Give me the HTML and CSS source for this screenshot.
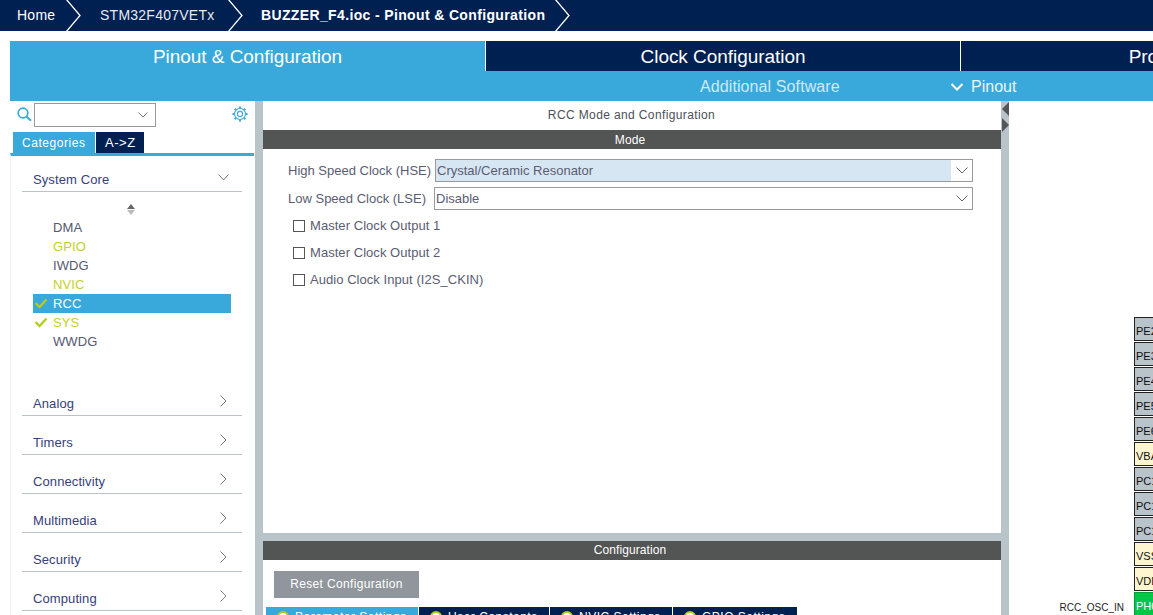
FILE: index.html
```html
<!DOCTYPE html>
<html lang="en">
<head>
<meta charset="utf-8">
<title>BUZZER_F4.ioc - Pinout &amp; Configuration</title>
<link rel="stylesheet" href="styles.css">
</head>
<body>
<nav class="crumbs">
  <span class="crumb c1">Home</span><svg class="sep" width="20" height="31" viewBox="0 0 20 31"><path d="M1 -1 L15 15.5 L1 32" fill="none" stroke="#fff" stroke-width="1.3"/></svg>
  <span class="crumb c2">STM32F407VETx</span><svg class="sep" width="20" height="31" viewBox="0 0 20 31"><path d="M1 -1 L15 15.5 L1 32" fill="none" stroke="#fff" stroke-width="1.3"/></svg>
  <span class="crumb c3">BUZZER_F4.ioc - Pinout &amp; Configuration</span><svg class="sep" width="20" height="31" viewBox="0 0 20 31"><path d="M1 -1 L15 15.5 L1 32" fill="none" stroke="#fff" stroke-width="1.3"/></svg>
</nav>
<div class="topgap"></div>
<header class="tabs">
  <div class="tabrow">
    <div class="maintab active t1">Pinout &amp; Configuration</div>
    <div class="maintab t2">Clock Configuration</div>
    <div class="maintab t3">Project Manager</div>
  </div>
  <div class="subrow">
    <span class="addsw">Additional Software</span>
    <span class="pinout"><svg width="14" height="10" viewBox="0 0 14 10"><path d="M1.5 2 L7 7.5 L12.5 2" fill="none" stroke="#fff" stroke-width="2"/></svg>Pinout</span>
  </div>
</header>
<main class="body">
  <aside class="side">
    <div class="searchrow">
      <svg class="mag" width="15" height="14" viewBox="0 0 15 14"><circle cx="6" cy="6" r="4.800" fill="none" stroke="#39a9dc" stroke-width="1.700"/><path d="M9.500 9.500 L14 13.800" stroke="#39a9dc" stroke-width="2"/></svg>
      <div class="combo"><svg width="10" height="6" viewBox="0 0 10 6"><path d="M.5 .5 L5 5 L9.500 .5" fill="none" stroke="#777" stroke-width="1"/></svg></div>
      <svg class="gear" width="16" height="16" viewBox="0 0 16 16"><circle cx="8" cy="8" r="2.600" fill="none" stroke="#39a9dc" stroke-width="1.100"/><circle cx="8" cy="8" r="5.500" fill="none" stroke="#39a9dc" stroke-width="1.100"/><path d="M8 .5V2.500M8 13.500V15.500M.5 8H2.500M13.500 8H15.500M2.700 2.700L4.100 4.100M11.900 11.900L13.300 13.300M13.300 2.700L11.900 4.100M4.100 11.900L2.700 13.300" stroke="#39a9dc" stroke-width="2"/></svg>
    </div>
    <div class="sidetabs"><span class="stab on">Categories</span><span class="stab az">A-&gt;Z</span></div>
    <div class="panel">
      <div class="cat first"><span>System Core</span><svg width="11" height="7" viewBox="0 0 11 7"><path d="M.5 .5 L5.500 6 L10.500 .5" fill="none" stroke="#777"/></svg></div>
      <div class="sorter"><i class="up"></i><i class="down"></i></div>
      <ul class="items">
        <li>DMA</li>
        <li class="warn">GPIO</li>
        <li>IWDG</li>
        <li class="warn">NVIC</li>
        <li class="sel"><svg width="14" height="11" viewBox="0 0 14 11"><path d="M1.500 5 L5.500 9 L12.500 1.500" fill="none" stroke="#b5cc18" stroke-width="2.300"/></svg>RCC</li>
        <li class="warn chk"><svg width="14" height="11" viewBox="0 0 14 11"><path d="M1.500 5 L5.500 9 L12.500 1.500" fill="none" stroke="#b5cc18" stroke-width="2.300"/></svg>SYS</li>
        <li>WWDG</li>
      </ul>
      <div class="cat"><span>Analog</span><svg width="7" height="12" viewBox="0 0 7 12"><path d="M.5 .5 L6 6 L.5 11.500" fill="none" stroke="#777"/></svg></div>
      <div class="cat"><span>Timers</span><svg width="7" height="12" viewBox="0 0 7 12"><path d="M.5 .5 L6 6 L.5 11.500" fill="none" stroke="#777"/></svg></div>
      <div class="cat"><span>Connectivity</span><svg width="7" height="12" viewBox="0 0 7 12"><path d="M.5 .5 L6 6 L.5 11.500" fill="none" stroke="#777"/></svg></div>
      <div class="cat"><span>Multimedia</span><svg width="7" height="12" viewBox="0 0 7 12"><path d="M.5 .5 L6 6 L.5 11.500" fill="none" stroke="#777"/></svg></div>
      <div class="cat"><span>Security</span><svg width="7" height="12" viewBox="0 0 7 12"><path d="M.5 .5 L6 6 L.5 11.500" fill="none" stroke="#777"/></svg></div>
      <div class="cat"><span>Computing</span><svg width="7" height="12" viewBox="0 0 7 12"><path d="M.5 .5 L6 6 L.5 11.500" fill="none" stroke="#777"/></svg></div>
    </div>
  </aside>
  <section class="center">
    <div class="mode">
      <div class="title">RCC Mode and Configuration</div>
      <div class="bar">Mode</div>
      <div class="formrow r1"><label>High Speed Clock (HSE)</label><div class="select hse"><span class="val">Crystal/Ceramic Resonator</span><span class="arrow"><svg width="12" height="7" viewBox="0 0 12 7"><path d="M.5 .5 L6 6 L11.500 .5" fill="none" stroke="#666"/></svg></span></div></div>
      <div class="formrow r2"><label>Low Speed Clock (LSE)</label><div class="select lse"><span class="val">Disable</span><span class="arrow"><svg width="12" height="7" viewBox="0 0 12 7"><path d="M.5 .5 L6 6 L11.500 .5" fill="none" stroke="#666"/></svg></span></div></div>
      <div class="check"><i></i>Master Clock Output 1</div>
      <div class="check"><i></i>Master Clock Output 2</div>
      <div class="check"><i></i>Audio Clock Input (I2S_CKIN)</div>
    </div>
    <div class="config">
      <div class="bar">Configuration</div>
      <div class="btnrow"><span class="reset">Reset Configuration</span></div>
      <div class="cfgtabs">
        <span class="ctab on w1"><b></b>Parameter Settings</span>
        <span class="ctab w2"><b></b>User Constants</span>
        <span class="ctab w3"><b></b>NVIC Settings</span>
        <span class="ctab w4"><b></b>GPIO Settings</span>
      </div>
    </div>
  </section>
  <div class="divider"><i class="al"></i><i class="ar"></i></div>
  <section class="chip">
    <div class="pinrow"><span class="pin">PE2</span></div>
    <div class="pinrow"><span class="pin">PE3</span></div>
    <div class="pinrow"><span class="pin">PE4</span></div>
    <div class="pinrow"><span class="pin">PE5</span></div>
    <div class="pinrow"><span class="pin">PE6</span></div>
    <div class="pinrow"><span class="pin pw">VBAT</span></div>
    <div class="pinrow"><span class="pin">PC13</span></div>
    <div class="pinrow"><span class="pin">PC14</span></div>
    <div class="pinrow"><span class="pin">PC15</span></div>
    <div class="pinrow"><span class="pin pw">VSS</span></div>
    <div class="pinrow"><span class="pin pw">VDD</span></div>
    <div class="pinrow"><span class="pinlabel">RCC_OSC_IN</span><span class="pin ok">PH0</span></div>
  </section>
</main>
</body>
</html>
```
FILE: styles.css
```css
* { box-sizing: border-box; }
html, body { margin: 0; height: 615px; overflow: hidden; background: #fff; }
body { font-family: "Liberation Sans", Arial, sans-serif; font-size: 13px; color: #4b4f66; width: 1153px; }

.crumbs { height: 31px; background: #002052; color: #fff; display: flex; align-items: center; overflow: hidden; font-size: 14px; }
.crumb { display: block; white-space: nowrap; line-height: 28px; margin-bottom: 2px; letter-spacing: .25px; }
.sep { flex: none; display: block; }
.c1 { margin-left: 17px; width: 48px; }
.c2 { margin-left: 15px; width: 127px; color: #e6e9ef; }
.c3 { margin-left: 14px; width: 293px; font-weight: 700; letter-spacing: .36px; }

.topgap { height: 10px; }

.tabs { margin-left: 10px; background: #39a9dc; height: 60px; color: #fff; overflow: hidden; }
.tabrow { display: flex; height: 30px; }
.maintab { font-size: 19px; line-height: 31px; letter-spacing: -.05px; text-align: center; flex: none; white-space: nowrap; background: #002052; }
.maintab.active { background: #39a9dc; }
.t1 { width: 475px; }
.t2 { width: 475px; border-left: 1px solid #fff; }
.t3 { width: 475px; border-left: 1px solid #fff; }
.subrow { height: 30px; display: flex; align-items: center; font-size: 16px; padding-top: 1px; }
.addsw { margin-left: 690px; color: #cfe9f6; white-space: nowrap; width: 250px; letter-spacing: .1px; }
.pinout { display: flex; align-items: center; gap: 7px; color: #e8f5fb; }

.body { display: flex; height: 514px; overflow: hidden; }

.side { width: 263px; flex: none; padding-left: 10px; background: linear-gradient(to right, #fff 255px, #b8c3ca 255px); display: flex; flex-direction: column; }
.searchrow { width: 244px; height: 31px; display: flex; align-items: flex-start; padding: 2px 0 0 7px; }
.mag { flex: none; margin: 4px 2px 0 0; }
.combo { width: 122px; height: 24px; border: 1px solid #9a9a9a; display: flex; align-items: center; justify-content: flex-end; padding-right: 7px; flex: none; }
.gear { margin: 3px 0 0 76px; flex: none; }
.sidetabs { display: flex; height: 21px; padding-left: 3px; gap: 1px; color: #fff; }
.stab { background: #002052; padding: 0 9px; line-height: 22px; font-size: 12px; letter-spacing: .55px; display: block; height: 21px; white-space: nowrap; }
.stab.on { background: #39a9dc; width: 82px; }
.stab.az { width: 48px; font-size: 13px; }
.panel { flex: 1; border-top: 3px solid #39a9dc; width: 244px; border-left: 1px solid #eef0f1; }
.cat { margin-left: 11px; width: 220px; height: 39px; border-bottom: 1px solid #b8c3ca; display: flex; justify-content: space-between; align-items: flex-end; color: #36407a; padding: 0 15px 3px 11px; letter-spacing: .1px; }
.cat span { line-height: 16px; }
.cat svg { margin-bottom: 5px; }
.cat.first { height: 36px; padding-right: 13px; }
.cat.first svg { margin-bottom: 7px; }
.sorter { margin: 12px 0 0 116px; width: 9px; height: 11px; display: flex; flex-direction: column; gap: 1px; }
.sorter i { display: block; width: 0; height: 0; border-left: 4.5px solid transparent; border-right: 4.5px solid transparent; }
.sorter .up { border-bottom: 5px solid #666; }
.sorter .down { border-top: 5px solid #bbb; }
.items { list-style: none; margin: 3px 0 0 22px; padding: 0; width: 198px; height: 159px; color: #55586f; }
.items li { height: 19px; line-height: 19px; padding-left: 20px; position: relative; letter-spacing: .1px; }
.items li svg { position: absolute; left: 1px; top: 4px; }
.items .warn { color: #c4d21c; }
.items .sel { background: #39a9dc; color: #fff; }

.center { width: 738px; flex: none; display: flex; flex-direction: column; font-size: 12px; background: #b8c3ca; overflow: hidden; height: 514px; }
.mode { height: 432px; flex: none; background: #fff; }
.title { height: 29px; line-height: 29px; text-align: center; color: #4b4f58; letter-spacing: .38px; padding-right: 1px; }
.bar { height: 19px; line-height: 20px; background: #535454; color: #fff; text-align: center; padding-right: 4px; letter-spacing: .1px; }
.config .bar { line-height: 19px; }
.formrow { display: flex; align-items: center; font-size: 13px; padding-left: 25px; color: #5a5d72; }
.formrow label { white-space: nowrap; }
.r1 { margin-top: 10px; height: 23px; }
.r2 { margin-top: 5px; height: 23px; }
.r1 label { width: 147px; }
.r2 label { width: 146px; }
.select { border: 1px solid #9a9a9a; height: 100%; display: flex; align-items: center; justify-content: space-between; color: #5a5d72; }
.hse { width: 538px; }
.lse { width: 539px; }
.val { padding-left: 1px; flex: 1; height: 100%; line-height: 21px; }
.hse .val { background: #d7e6f3; }
.arrow { width: 21px; display: flex; justify-content: center; flex: none; }
.check { display: flex; align-items: center; gap: 5px; margin-left: 30px; height: 27px; font-size: 13px; color: #5a5d72; letter-spacing: .05px; }
.check i { display: block; width: 12px; height: 12px; border: 1px solid #555; background: #fff; flex: none; }
.r2 + .check { margin-top: 2px; }

.config { flex: none; height: 74px; margin-top: 8px; background: #fff; }
.btnrow { padding: 11px 0 0 11px; height: 47px; }
.reset { display: block; width: 145px; height: 27px; background: #90969c; color: #fff; font-size: 12px; letter-spacing: .35px; line-height: 27px; text-align: center; }
.cfgtabs { display: flex; padding-left: 3px; gap: 1px; height: 20px; }
.ctab { display: block; background: #002052; color: #fff; font-size: 12px; height: 20px; line-height: 20px; white-space: nowrap; overflow: hidden; padding-left: 11px; letter-spacing: .5px; }
.ctab.on { background: #39a9dc; }
.ctab b { display: inline-block; width: 12px; height: 12px; border-radius: 50%; background: #fff; border: 2px solid #b5cc18; vertical-align: -2px; margin-right: 6px; }
.w1 { width: 152px; }
.w2 { width: 130px; }
.w3 { width: 122px; }
.w4 { width: 124px; }

.divider { width: 8px; flex: none; background: #b8c3ca; display: flex; flex-direction: column; align-items: flex-end; gap: 2px; padding-top: 1px; }
.divider i { display: block; width: 0; height: 0; border-top: 7px solid transparent; border-bottom: 7px solid transparent; }
.divider .al { border-right: 7px solid #555; }
.divider .ar { border-left: 7px solid #555; }

.chip { flex: 1; background: #fff; overflow: hidden; padding-top: 216px; }
.pinrow { display: flex; height: 25px; padding-left: 125px; white-space: nowrap; }
.pin { display: block; flex: none; width: 40px; height: 24px; background: #b8c3ca; border: 1px solid #222; border-right: 0; padding-left: 1px; color: #111; font-size: 11px; line-height: 27px; overflow: hidden; white-space: nowrap; }
.pin.pw { background: #fdf5cf; }
.pin.ok { background: #00c846; color: #fff; border-color: #00a03a; }
.pinlabel { flex: none; width: 125px; margin-left: -125px; padding-right: 10px; text-align: right; font-size: 10px; line-height: 32px; color: #222; }
```
